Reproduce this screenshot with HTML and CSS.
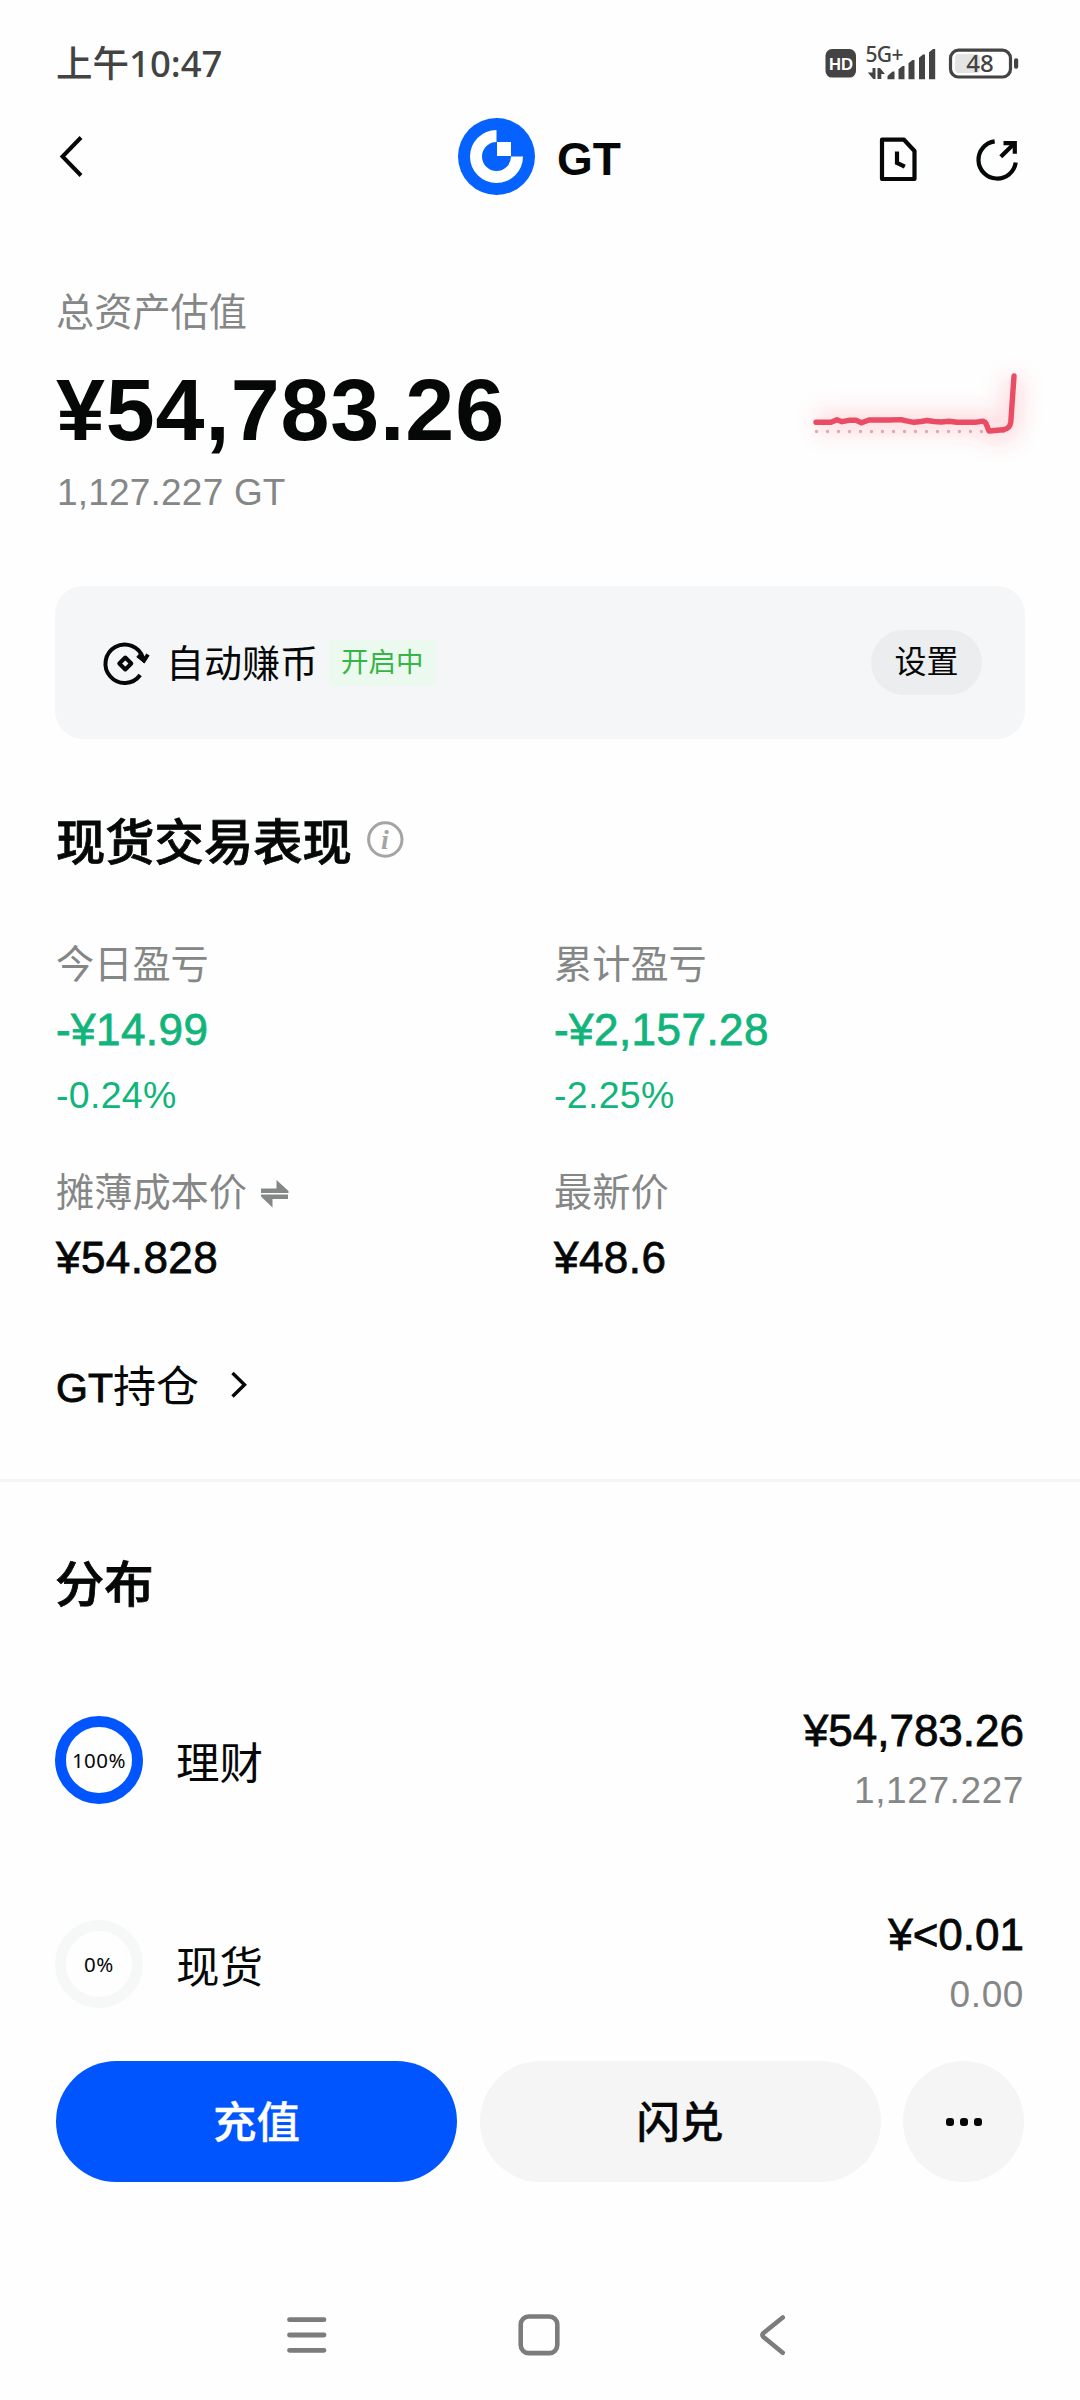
FILE: index.html
```html
<!DOCTYPE html>
<html lang="zh-CN">
<head>
<meta charset="utf-8">
<title>GT</title>
<link rel="stylesheet" href="styles.css">
</head>
<body>
<div class="screen">
  <div class="statusbar">
    <span class="clock">上午10:47</span>
    <svg class="status-icons" viewBox="822 42 200 40" width="200" height="40">
      <rect x="825.5" y="48" width="30.5" height="28.6" rx="6.5" fill="#434343"/>
      <text class="hd" x="841" y="68.5" text-anchor="middle" textLength="24" lengthAdjust="spacingAndGlyphs">HD</text>
      <text class="net" x="865.5" y="61" textLength="38">5G+</text>
      <g fill="#434343">
        <path d="M872.500 67h3v11h-2.200l-5.500-6.500h4.700zM877.500 67h2.500l5 6h-3.700v5h-3.800z"/>
        <path d="M887.500 78.200v-3.200l5-4.500h2v7.700zM898.500 78.200v-10l4-3.200h2v13.200zM908.500 78.200v-16l4-3.200h2v19.200zM919 78.200v-21.500l4-3.200h2v24.700zM929 78.200v-27l4-3.200h2.200v30.200z"/>
        <rect x="1014" y="57.200" width="4.200" height="10.500" rx="2"/>
      </g>
      <rect x="955" y="53" width="25" height="19" rx="4" fill="#e4e4e4"/>
      <rect x="950.500" y="49.200" width="60" height="26.800" rx="8" fill="none" stroke="#434343" stroke-width="3.200"/>
      <text class="battery" x="980" y="71.300" text-anchor="middle">48</text>
    </svg>
  </div>

  <header class="header">
    <svg class="back" viewBox="56 134 30 46" width="30" height="46"><path d="M81 137.500 62.500 156.500 81 175.500" fill="none" stroke="#060808" stroke-width="4"/></svg>
    <div class="coin">
      <svg viewBox="-38.500 -38.500 77 77" width="77" height="77">
        <circle r="38.500" fill="#0562ff"/>
        <path d="M0-26.500A26.500 26.500 0 1 0 26.500 0H14.500A14.500 14.500 0 1 1 0-14.500z" fill="#fff"/>
        <path d="M.5-14.500h14V-.5H.5z" fill="#fff"/>
      </svg>
      <span class="coin-name">GT</span>
    </div>
    <div class="tools">
      <svg viewBox="878 134 40 48" width="40" height="48" fill="none" stroke="#060808" stroke-width="4.200" stroke-linejoin="round"><path d="M882 138.700h22l10.500 11.300v28H882z"/><path d="M897 150.500v11.500l7.800 3.700" stroke-linejoin="miter"/></svg>
      <svg viewBox="974 134 46 50" width="46" height="50" fill="none" stroke="#060808" stroke-width="4.200"><path d="M994.700 141.300A18.700 18.700 0 1 0 1015.700 162.500"/><path d="M1000.800 156.700l14-13.700"/><path d="M1003.500 143.200h11.300v10.600"/></svg>
    </div>
  </header>

  <section class="overview">
    <div class="label">总资产估值</div>
    <div class="total">
      <span class="amount">¥54,783.26</span>
      <svg class="spark" viewBox="810 360 214 100" width="214" height="100">
        <defs><filter id="glow" x="-20%" y="-60%" width="140%" height="240%"><feGaussianBlur stdDeviation="10"/></filter></defs>
        <path d="M816 422H984L990 431H1004L1010 425 1014 378" fill="none" stroke="#f94b5c" stroke-opacity=".18" stroke-width="22" filter="url(#glow)"/>
        <path d="M816.500 431.500H1014" stroke="#dfa9b0" stroke-width="3.400" stroke-linecap="round" stroke-dasharray="0 11"/>
        <path d="M816 422.200H831L837 419.800 842 421.700 849 420.300H856L861.500 422.800 869 420H889L901 419.600 905 420.700 914 422.300 921 421.500 927 420.500 934 421.500 941 422 949 421.300 957 422.300H975L981 421.300Q984.500 420.800 986 423.500L989 431 1003 429.700Q1010 429 1010.800 422L1014 376" fill="none" stroke="#e94c63" stroke-width="5.400" stroke-linecap="round" stroke-linejoin="round"/>
      </svg>
    </div>
    <div class="sub">1,127.227 GT</div>
  </section>

  <section class="earn">
    <svg viewBox="102 640 48 48" width="48" height="48" fill="none" stroke="#060808" stroke-width="4"><path d="M140.200 676A19.200 19.200 0 1 1 143 659"/><path d="M137.500 656.500 144 661.500 148 655.500" /><path d="M138 658h9.500l-4 5.500z" fill="#060808" stroke-width="1"/><path d="M125.300 658.500l6 6-6 6-6-6z" stroke-linejoin="round"/></svg>
    <span class="earn-name">自动赚币</span>
    <span class="tag">开启中</span>
    <span class="settings">设置</span>
  </section>

  <section class="performance">
    <h2 class="title">现货交易表现
      <svg viewBox="366 819 39 39" width="39" height="39"><circle cx="385.300" cy="838.500" r="16.700" fill="none" stroke="#a3a5a5" stroke-width="3"/><text class="info" x="385" y="848" text-anchor="middle">i</text></svg>
    </h2>
    <div class="stats">
      <div><div class="label">今日盈亏</div><div class="value green">-¥14.99</div><div class="percent">-0.24%</div></div>
      <div><div class="label">累计盈亏</div><div class="value green">-¥2,157.28</div><div class="percent">-2.25%</div></div>
      <div><div class="label swap">摊薄成本价 <svg viewBox="261 1178 30 30" width="30" height="30" fill="#858787"><path d="M262 1188.500h15.500v-8.500l12 11v2H262zM289 1199h-15.500v8.500l-11.500-11v-2H289z"/></svg></div><div class="value">¥54.828</div></div>
      <div><div class="label">最新价</div><div class="value">¥48.6</div></div>
    </div>
    <div class="holding"><span><b class="ticker">GT</b>持仓</span>
      <svg viewBox="230 1370 20 32" width="20" height="32"><path d="M232.500 1372 244.500 1383.700 232.500 1395.500" fill="none" stroke="#060808" stroke-width="3.400"/></svg>
    </div>
  </section>

  <section class="distribution">
    <h2 class="title">分布</h2>
    <div class="row">
      <span class="ring full">100%</span><span class="kind">理财</span>
      <div class="figures"><div class="value">¥54,783.26</div><div class="sub">1,127.227</div></div>
    </div>
    <div class="row">
      <span class="ring">0%</span><span class="kind">现货</span>
      <div class="figures"><div class="value">¥&lt;0.01</div><div class="sub">0.00</div></div>
    </div>
  </section>

  <div class="actions">
    <span class="button primary">充值</span>
    <span class="button">闪兑</span>
    <span class="button more"><i></i><i></i><i></i></span>
  </div>

  <nav class="navbar">
    <svg viewBox="285 2312 44 46" width="44" height="46" stroke="#7c7c7c" stroke-width="4.800" stroke-linecap="round"><path d="M289.500 2319.700h34.500M289.500 2335h34.500M289.500 2350.300h34.500"/></svg>
    <svg class="home" viewBox="516 2312 46 46" width="46" height="46"><rect x="520.700" y="2316.500" width="36.600" height="36.600" rx="8" fill="none" stroke="#7c7c7c" stroke-width="4.600"/></svg>
    <svg viewBox="756 2312 34 46" width="34" height="46" fill="none" stroke="#7c7c7c" stroke-width="4.600" stroke-linecap="round" stroke-linejoin="round"><path d="M782.700 2317.500 763.500 2333Q761.500 2335 763.500 2337L782.700 2352.700"/></svg>
  </nav>
</div>
</body>
</html>
```
FILE: styles.css
```css
* { box-sizing: border-box; }

body {
  margin: 0;
  background: #fefefe;
  color: #060808;
  font-family: "Liberation Sans", "Noto Sans CJK SC", sans-serif;
}

svg { display: block; flex: none; overflow: visible; }

.screen {
  width: 1080px;
  height: 2400px;
  overflow: hidden;
  display: flex;
  flex-direction: column;
}

.statusbar {
  height: 84px;
  padding: 41px 58px 0 56px;
  display: flex;
  justify-content: space-between;
  align-items: center;
}

.clock {
  font: 500 36.500px/44px "Noto Sans", "Noto Sans CJK SC", sans-serif;
  color: #434343;
}

.hd { font: 700 17px "Liberation Sans", sans-serif; fill: #fff; }
.net { font: 500 21px "Noto Sans", sans-serif; fill: #434343; }
.battery { font: 500 24px "Noto Sans", sans-serif; fill: #434343; }

.header {
  height: 146px;
  padding: 0 60px 0 56px;
  display: grid;
  grid-template-columns: 402px 1fr auto;
  align-items: center;
}

.coin { display: flex; align-items: center; gap: 22px; margin-top: -1px; }
.coin-name { font-size: 46px; font-weight: 700; line-height: 50px; padding-top: 5px; }
.tools { display: flex; align-items: center; gap: 56px; padding-top: 3px; }

.overview { padding: 63px 56px 0; }

.label { font-size: 38.200px; line-height: 40px; color: #858787; }
.total { display: flex; justify-content: space-between; margin-top: 27px; }
.amount { font-size: 88px; font-weight: 700; line-height: 100px; letter-spacing: .85px; }
.sub { font-size: 37px; line-height: 40px; color: #858787; letter-spacing: .2px; }
.overview .sub { margin-top: 13px; padding-left: 1px; }

.earn {
  margin: 73px 55px 0;
  height: 153px;
  padding: 0 43px 0 47px;
  border-radius: 28px;
  background: #f4f6f8;
  display: flex;
  align-items: center;
}

.earn-name { font-size: 38px; line-height: 40px; margin: 2px 0 0 16px; }

.tag {
  margin: 0 auto 0 11px;
  padding: 0 12px;
  border-radius: 6px;
  background: #ebf9ee;
  color: #38b549;
  font-size: 27.500px;
  line-height: 46px;
}

.settings {
  width: 111px;
  border-radius: 33px;
  background: #ecedee;
  font-size: 32px;
  line-height: 65px;
  text-align: center;
}

.performance { padding: 70px 56px 62px; border-bottom: 3px solid #f5f5f5; }

.title {
  margin: 0;
  display: flex;
  align-items: center;
  gap: 14px;
  font: 500 49.300px/60px "Noto Sans CJK SC", sans-serif;
  -webkit-text-stroke: .8px currentColor;
}
.title svg { -webkit-text-stroke: 0; }

.info { font: italic 700 28px "Liberation Serif", serif; fill: #a3a5a5; }

.stats {
  margin-top: 76px;
  display: grid;
  grid-template-columns: 498px 1fr;
  row-gap: 58px;
}

.value { font-size: 44px; line-height: 50px; letter-spacing: .45px; -webkit-text-stroke: .8px currentColor; }
.stats .value { margin-top: 20px; }
.green { color: #11b57c; }
.percent { margin-top: 20px; font-size: 37.500px; line-height: 40px; color: #11b57c; letter-spacing: .3px; }
.swap { display: flex; align-items: center; gap: 13px; }

.holding {
  height: 60px;
  margin-top: 74px;
  display: flex;
  align-items: center;
  gap: 31px;
  font-size: 43px;
  line-height: 60px;
}
.ticker { font-weight: 400; font-size: 41px; -webkit-text-stroke: .9px currentColor; }

.distribution { padding: 69px 56px 0 55px; }
.row { height: 106px; display: flex; align-items: center; }
.distribution .title { margin-bottom: 94px; }
.row + .row { margin-top: 98px; }

.ring {
  width: 88px;
  height: 88px;
  margin-top: 3px;
  border: 11px solid #f6f8f8;
  border-radius: 50%;
  display: flex;
  align-items: center;
  justify-content: center;
  font: 400 20.500px "Noto Sans", sans-serif;
  letter-spacing: .5px;
}
.ring.full { border-color: #0055ff; }

.kind { margin: 11px auto 0 33px; font-size: 43.500px; line-height: 50px; }
.figures { text-align: right; }
.row .value { letter-spacing: 0; }
.row .sub { margin-top: 15px; letter-spacing: .6px; }

.actions {
  margin: 46px 56px 0;
  display: grid;
  grid-template-columns: 401px 401px 121px;
  justify-content: space-between;
}

.button {
  height: 121px;
  border-radius: 61px;
  background: #f5f5f6;
  font: 500 43.500px/118px "Noto Sans CJK SC", sans-serif;
  text-align: center;
  -webkit-text-stroke: .3px currentColor;
}
.primary { background: #0055ff; color: #fff; }
.more { display: flex; align-items: center; justify-content: center; gap: 6px; }
.more i { width: 8px; height: 8px; border-radius: 3px; background: #060808; }

.navbar {
  margin-top: 130px;
  padding: 0 290px 0 285px;
  display: flex;
  align-items: center;
  justify-content: space-between;
}
.home { margin-right: 8px; }
```
